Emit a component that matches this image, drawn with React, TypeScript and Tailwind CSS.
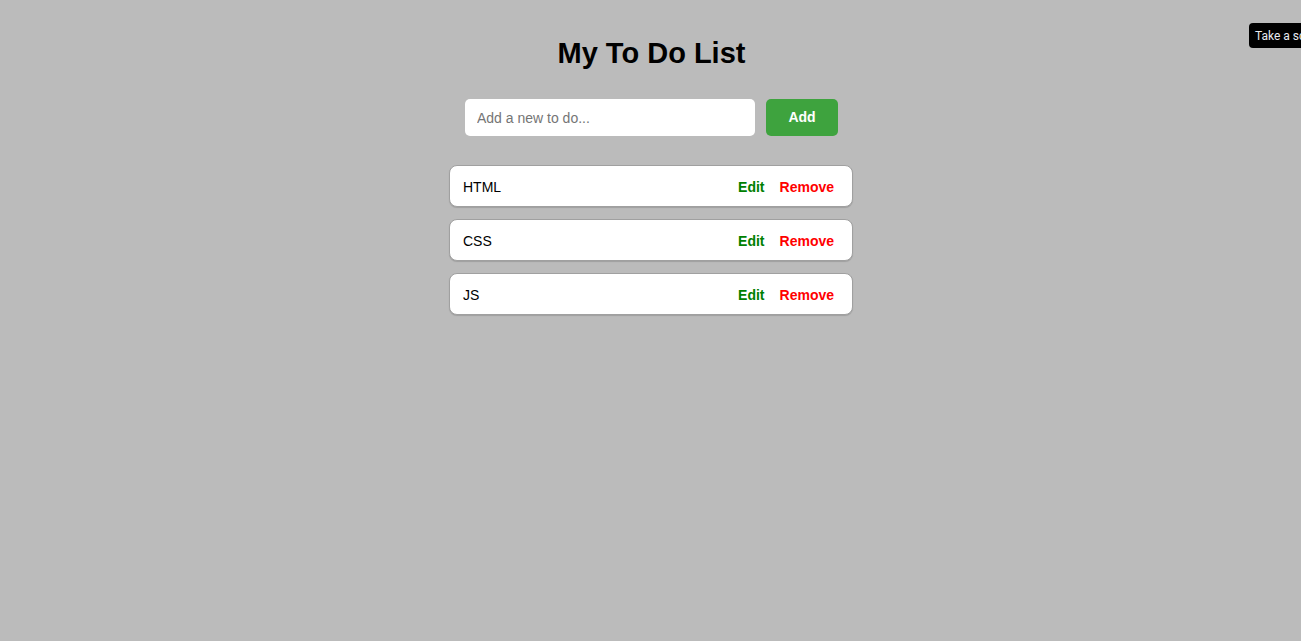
import { useState } from "react"

type Todo = { id: number; text: string }

const initial: Todo[] = [
  { id: 1, text: "HTML" },
  { id: 2, text: "CSS" },
  { id: 3, text: "JS" },
]

function TodoItem({ todo, onRemove }: { todo: Todo; onRemove: (id: number) => void }) {
  return (
    <li className="flex items-center justify-between h-[42px] pt-[2px] pl-[13px] pr-[18px] bg-white border border-[#a0a0a0] rounded-[8px] shadow-[0_1px_1px_rgba(0,0,0,0.15)]">
      <span className="text-[14px] text-black">{todo.text}</span>
      <div className="flex items-center gap-[15px] text-[14px] font-bold">
        <button className="text-[#008000]">Edit</button>
        <button className="text-[#ff0000]" onClick={() => onRemove(todo.id)}>Remove</button>
      </div>
    </li>
  )
}

export default function App() {
  const [todos, setTodos] = useState<Todo[]>(initial)
  const [value, setValue] = useState("")

  const add = () => {
    if (!value.trim()) return
    setTodos([...todos, { id: Date.now(), text: value.trim() }])
    setValue("")
  }

  return (
    <div className="relative min-h-[641px] w-full bg-[#bbbbbb] font-['Liberation_Sans',Arial,sans-serif] overflow-hidden">
      <div className="flex flex-col items-center pt-[36px]">
        <h1 className="text-[29px] leading-[34px] font-bold text-black ml-[2px]">My To Do List</h1>

        <div className="flex items-center gap-[11px] mt-[29px] ml-[2px]">
          <input
            value={value}
            onChange={(e) => setValue(e.target.value)}
            placeholder="Add a new to do..."
            className="w-[290px] h-[37px] px-[12px] text-[14px] bg-white rounded-[5px] outline-none placeholder:text-[#757575]"
          />
          <button
            onClick={add}
            className="w-[72px] h-[37px] rounded-[5px] bg-[#3ea33e] text-white text-[14px] font-bold"
          >
            Add
          </button>
        </div>

        <ul className="flex flex-col gap-[12px] w-[404px] mt-[29px] ml-[1px]">
          {todos.map((t) => (
            <TodoItem key={t.id} todo={t} onRemove={(id) => setTodos(todos.filter((x) => x.id !== id))} />
          ))}
        </ul>
      </div>

      {/* screenshot extension tooltip, cut off at the window edge */}
      <div className="absolute left-[1249px] top-[23px] h-[25px] flex items-center pl-[6px] pr-[8px] bg-black rounded-[4px] text-[12px] text-[#e8eaf0] whitespace-nowrap font-['Roboto',sans-serif]">
        Take a screenshot
      </div>
    </div>
  )
}
